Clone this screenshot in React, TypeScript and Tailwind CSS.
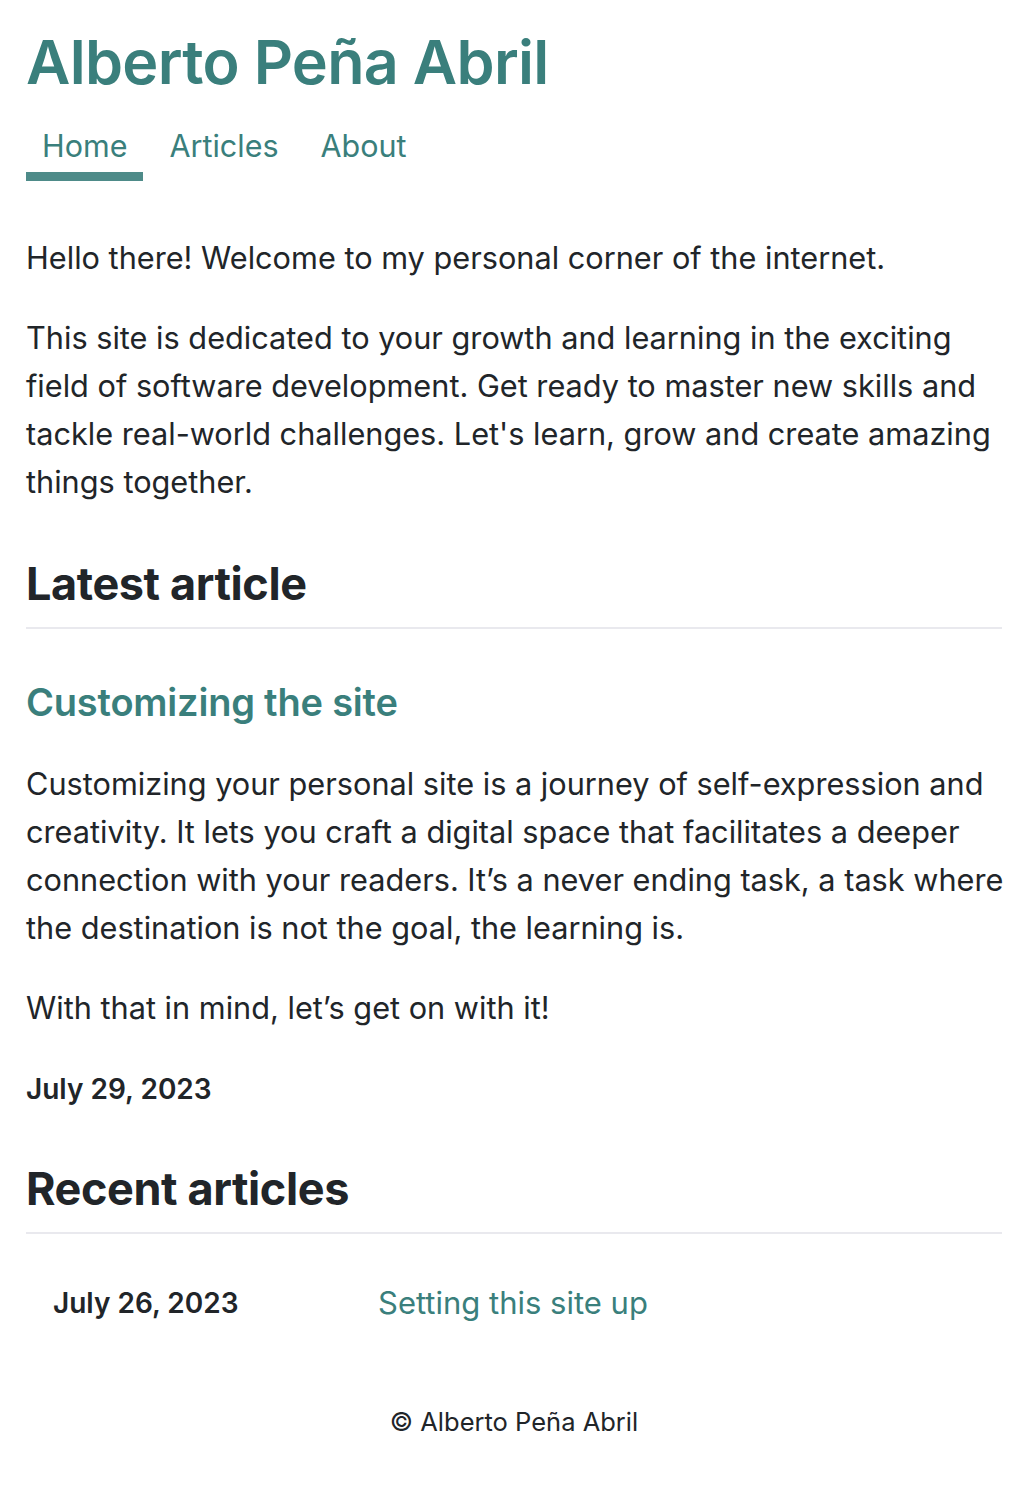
const teal = "text-[#3a7f7c]";

const App = () => {
  return (
    <div className="min-h-[1490px] bg-white font-['Inter',sans-serif] text-[#212529]">
      <div className="px-[26px]">
        <header className="pt-[24px]">
          <h1 className={`text-[61px] font-semibold leading-[76px] tracking-[-0.7px] ${teal}`}>
            Alberto Peña Abril
          </h1>
          <nav className="mt-[26px] flex gap-[10px] text-[30.5px] leading-[40px]">
            <a className={`border-b-[9px] border-[#4e8b89] px-[16px] pb-[6px] ${teal}`}>Home</a>
            <a className={`px-[16px] pb-[6px] ${teal}`}>Articles</a>
            <a className={`px-[16px] pb-[6px] ${teal}`}>About</a>
          </nav>
        </header>

        <main className="mt-[53px] text-[30.7px] leading-[48px]">
          <p>Hello there! Welcome to my personal corner of the internet.</p>
          <p className="mt-[32px]">
            This site is dedicated to your growth and learning in the exciting field of software
            development. Get ready to master new skills and tackle real-world challenges. Let's
            learn, grow and create amazing things together.
          </p>

          <section className="mt-[51px]">
            <h2 className="border-b-2 border-[#e9e9ee] pb-[16px] text-[45px] font-bold leading-[54px] tracking-[-0.4px]">
              Latest article
            </h2>
            <h3 className={`mt-[49px] text-[38px] font-semibold leading-[48px] tracking-[-0.2px] ${teal}`}>
              Customizing the site
            </h3>
            <p className="mt-[34px] mr-[-10px]">
              Customizing your personal site is a journey of self-expression and creativity. It lets
              you craft a digital space that facilitates a deeper connection with your readers. It’s a
              never ending task, a task where the destination is not the goal, the learning is.
            </p>
            <p className="mt-[32px]">With that in mind, let’s get on with it!</p>
            <p className="mt-[33px] text-[28px] font-semibold leading-[48px]">July 29, 2023</p>
          </section>

          <section className="mt-[49px]">
            <h2 className="border-b-2 border-[#e9e9ee] pb-[16px] text-[45px] font-bold leading-[54px] tracking-[-0.4px]">
              Recent articles
            </h2>
            <div className="mt-[45px] grid grid-cols-[352px_1fr] items-center">
              <span className="pl-[27px] text-[28px] font-semibold">July 26, 2023</span>
              <a className={`text-[31px] ${teal}`}>Setting this site up</a>
            </div>
          </section>
        </main>

        <footer className="mt-[75px] text-center text-[25.5px] leading-[40px]">
          © Alberto Peña Abril
        </footer>
      </div>
    </div>
  );
};

export default App;
